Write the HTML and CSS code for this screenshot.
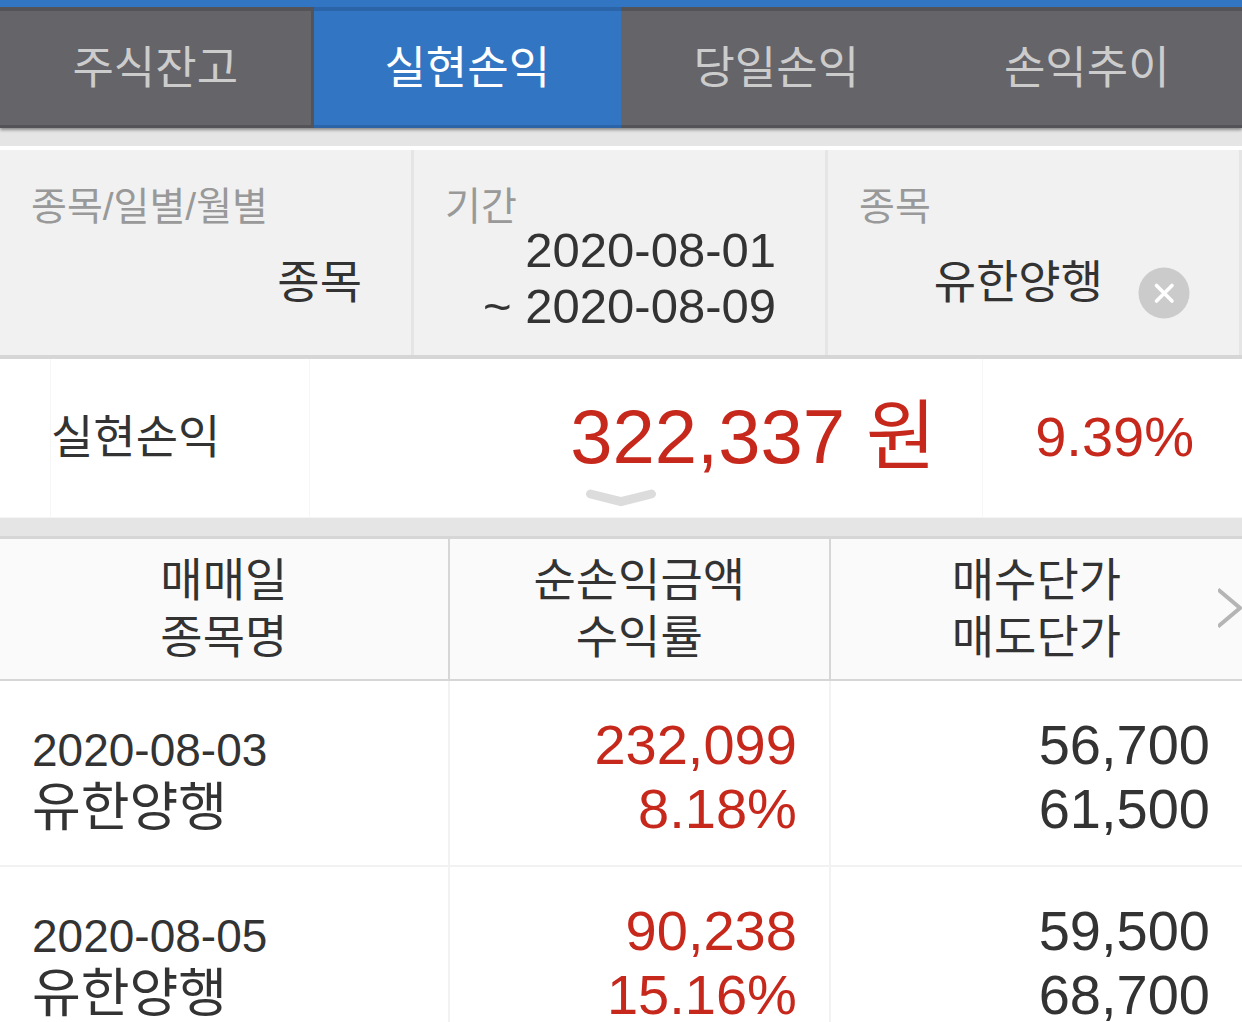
FILE: index.html
```
<!DOCTYPE html>
<html lang="ko">
<head>
    <meta charset="UTF-8">
    <meta name="viewport" content="width=device-width, initial-scale=1.0">
    <title>실현손익</title>
    <link rel="stylesheet" href="styles.css">
</head>
<body>
    <nav class="tabs">
        <button type="button" class="tab">주식잔고</button>
        <button type="button" class="tab active">실현손익</button>
        <button type="button" class="tab">당일손익</button>
        <button type="button" class="tab">손익추이</button>
    </nav>

    <div class="filters">
        <div class="filter">
            <label class="filter-label" for="view">종목/일별/월별</label>
            <div class="filter-value">
                <select id="view">
                    <option>종목</option>
                    <option>일별</option>
                    <option>월별</option>
                </select>
            </div>
        </div>
        <div class="filter">
            <span class="filter-label" id="period-label">기간</span>
            <div class="filter-value">
                <button type="button" class="period" aria-labelledby="period-label period"><span id="period">2020-08-01<br>~ 2020-08-09</span></button>
            </div>
        </div>
        <div class="filter">
            <span class="filter-label" id="stock-label">종목</span>
            <div class="filter-value">
                <button type="button" class="stock" aria-labelledby="stock-label stock"><span id="stock">유한양행</span></button>
                <button type="button" class="clear" aria-label="지우기">
                    <svg viewBox="0 0 52 52" width="52" height="52">
                        <circle cx="26" cy="26" r="25.5" fill="#cbcbcb"/>
                        <path d="M18.5 18.5 L34 34 M34 18.5 L18.5 34" stroke="#fff" stroke-width="3.6" stroke-linecap="round"/>
                    </svg>
                </button>
            </div>
        </div>
    </div>

    <div class="summary">
        <div class="summary-name">실현손익</div>
        <div class="summary-amount">322,337 원</div>
        <div class="summary-rate">9.39%</div>
        <button type="button" class="expand" aria-label="펼치기">
            <svg viewBox="0 0 70 18" width="70" height="18">
                <path d="M4.5 5 L35 12.5 L65.5 5" fill="none" stroke="#dcdcdc" stroke-width="9" stroke-linecap="round"/>
            </svg>
        </button>
    </div>

    <div class="trades">
        <table>
            <colgroup>
                <col class="col-name">
                <col class="col-profit">
                <col class="col-price">
            </colgroup>
            <thead>
                <tr>
                    <th>매매일<br>종목명</th>
                    <th>순손익금액<br>수익률</th>
                    <th>매수단가<br>매도단가</th>
                </tr>
            </thead>
            <tbody>
                <tr>
                    <td class="name"><span class="date">2020-08-03</span><br>유한양행</td>
                    <td class="profit">232,099<br>8.18%</td>
                    <td>56,700<br>61,500</td>
                </tr>
                <tr>
                    <td class="name"><span class="date">2020-08-05</span><br>유한양행</td>
                    <td class="profit">90,238<br>15.16%</td>
                    <td>59,500<br>68,700</td>
                </tr>
            </tbody>
        </table>
        <button type="button" class="next" aria-label="다음">
            <svg viewBox="0 0 24 40" width="24" height="40">
                <path d="M0 1.5 L22 20 L0 38.5" fill="none" stroke="#b5b5b5" stroke-width="4"/>
            </svg>
        </button>
    </div>
</body>
</html>
```
FILE: styles.css
```
* {
    box-sizing: border-box;
}
body {
    margin: 0;
    font-family: "Liberation Sans", "Noto Sans CJK KR", sans-serif;
    background-color: #fff;
    color: #333;
}
button, select {
    margin: 0;
    padding: 0;
    border: none;
    background: none;
    color: inherit;
    font: inherit;
    cursor: pointer;
}
svg {
    display: block;
}

/* tabs */
.tabs {
    position: relative;
    display: grid;
    grid-template-columns: repeat(4, 1fr);
    border-top: 7px solid #3276c3;
    background-color: #545358;
    box-shadow: 0 2px 3px rgba(0,0,0,0.4);
}
.tab {
    height: 121px;
    padding-bottom: 8px;
    border-top: 4px solid #545358;
    border-bottom: 3px solid #545358;
    background-color: #656469;
    color: #ccc;
    font-size: 45px;
}
.tab.active {
    margin-left: 3px;
    border-color: #2b65a8;
    background-color: #3276c3;
    color: #fff;
}

/* filters */
.filters {
    display: grid;
    grid-template-columns: repeat(3, 1fr);
    border-top: 18px solid #e5e5e5;
    border-bottom: 4px solid #d6d6d6;
}
.filter {
    margin-top: 4px;
    padding: 42px 49px 21px 31px;
    border-right: 3px solid #e5e5e5;
    background-color: #f1f1f1;
}
.filter-label {
    display: block;
    line-height: 30px;
    font-size: 39px;
    color: #999;
}
.filter-value {
    display: flex;
    justify-content: flex-end;
    align-items: center;
    height: 112px;
    font-size: 46px;
}
.filter-value select {
    appearance: none;
    padding-top: 8px;
    text-align-last: right;
}
.filter-value .period {
    font-size: 49px;
    line-height: 56px;
    text-align: right;
    white-space: nowrap;
}
.clear {
    margin-top: 30px;
    margin-left: 35px;
}

/* summary */
.summary {
    position: relative;
    display: grid;
    grid-template-columns: 260px 1fr 259px;
    height: 159px;
    padding-left: 50px;
    line-height: 156px;
    border-bottom: 1px solid #f5f5f5;
}
.summary-name {
    border-left: 1px solid #f7f7f7;
    border-right: 1px solid #f7f7f7;
    font-size: 46px;
}
.summary-amount {
    padding-right: 46px;
    border-right: 1px solid #f7f7f7;
    font-size: 76px;
    text-align: right;
    color: #c6281c;
}
.summary-rate {
    padding-right: 48px;
    font-size: 56px;
    text-align: right;
    color: #c6281c;
}
.expand {
    position: absolute;
    bottom: 10px;
    left: 50%;
    transform: translateX(-50%);
}

/* trades */
.trades {
    position: relative;
    border-top: 18px solid #e5e5e5;
}
table {
    width: 100%;
    table-layout: fixed;
    border-collapse: separate;
    border-spacing: 0;
    border-top: 3px solid #d6d6d6;
}
.col-name {
    width: 36.2%;
}
.col-profit {
    width: 30.7%;
}
th {
    height: 142px;
    padding: 0;
    border-right: 2px solid #d6d6d6;
    border-bottom: 2px solid #d6d6d6;
    background-color: #fafafa;
    font-size: 46px;
    font-weight: normal;
    line-height: 57px;
}
td {
    height: 186px;
    padding: 7px 32px 0 0;
    border-right: 2px solid #f2f2f2;
    border-bottom: 2px solid #f2f2f2;
    font-size: 56px;
    line-height: 64px;
    text-align: right;
}
th:last-child, td:last-child {
    border-right: none;
}
td.name {
    padding: 10px 0 0 32px;
    font-size: 53px;
    line-height: 58px;
    text-align: left;
}
.date {
    font-size: 46px;
}
td.profit {
    color: #c6281c;
}
.next {
    position: absolute;
    top: 52px;
    right: 0;
}
```
